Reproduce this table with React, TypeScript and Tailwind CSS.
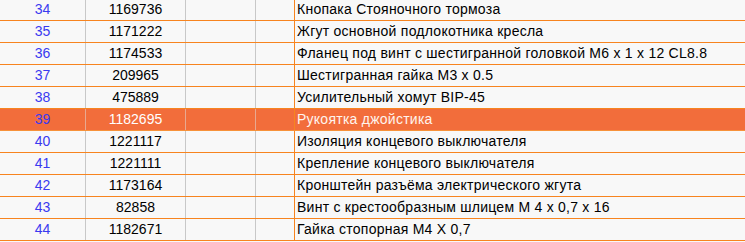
import React from "react";

const rows: [string, string, string][] = [
  ["34", "1169736", "Кнопака Стояночного тормоза"],
  ["35", "1171222", "Жгут основной подлокотника кресла"],
  ["36", "1174533", "Фланец под винт с шестигранной головкой М6 х 1 х 12 CL8.8"],
  ["37", "209965", "Шестигранная гайка М3 х 0.5"],
  ["38", "475889", "Усилительный хомут BIP-45"],
  ["39", "1182695", "Рукоятка джойстика"],
  ["40", "1221117", "Изоляция концевого выключателя"],
  ["41", "1221111", "Крепление концевого выключателя"],
  ["42", "1173164", "Кронштейн разъёма электрического жгута"],
  ["43", "82858", "Винт с крестообразным шлицем М 4 х 0,7 х 16"],
  ["44", "1182671", "Гайка стопорная М4 Х 0,7"],
];

export default function App() {
  return (
    <div
      className="w-[745px] h-[242px] overflow-hidden bg-[#f8f8f8]"
      style={{ fontFamily: '"Liberation Sans", Arial, sans-serif' }}
    >
      <div className="-mt-px">
        {rows.map(([n, code, name]) => {
          const hl = n === "39";
          return (
            <div
              key={n}
              className={
                "flex h-[22px] border-b text-[14px] leading-[21px] " +
                (hl ? "bg-[#f26d3b] border-[#f7923a]" : "border-[#f7841f]")
              }
            >
              <div className={"w-[86px] shrink-0 border-r text-center text-[#3a3af0] " + (hl ? "border-[#e8a890]" : "border-[#c8c8c8]")}>
                {n}
              </div>
              <div className={"w-[100px] shrink-0 border-r text-center " + (hl ? "border-[#e8a890] text-white" : "border-[#c8c8c8] text-black")}>
                {code}
              </div>
              <div className={"w-[70px] shrink-0 border-r " + (hl ? "border-[#e8a890]" : "border-[#c8c8c8]")}></div>
              <div className="w-[39px] shrink-0 border-r border-[#f7841f]"></div>
              <div className={"flex-1 pl-[2px] whitespace-nowrap tracking-[0.25px] " + (hl ? "text-[#fff4ee]" : "text-black")}>
                {name}
              </div>
            </div>
          );
        })}
      </div>
    </div>
  );
}
